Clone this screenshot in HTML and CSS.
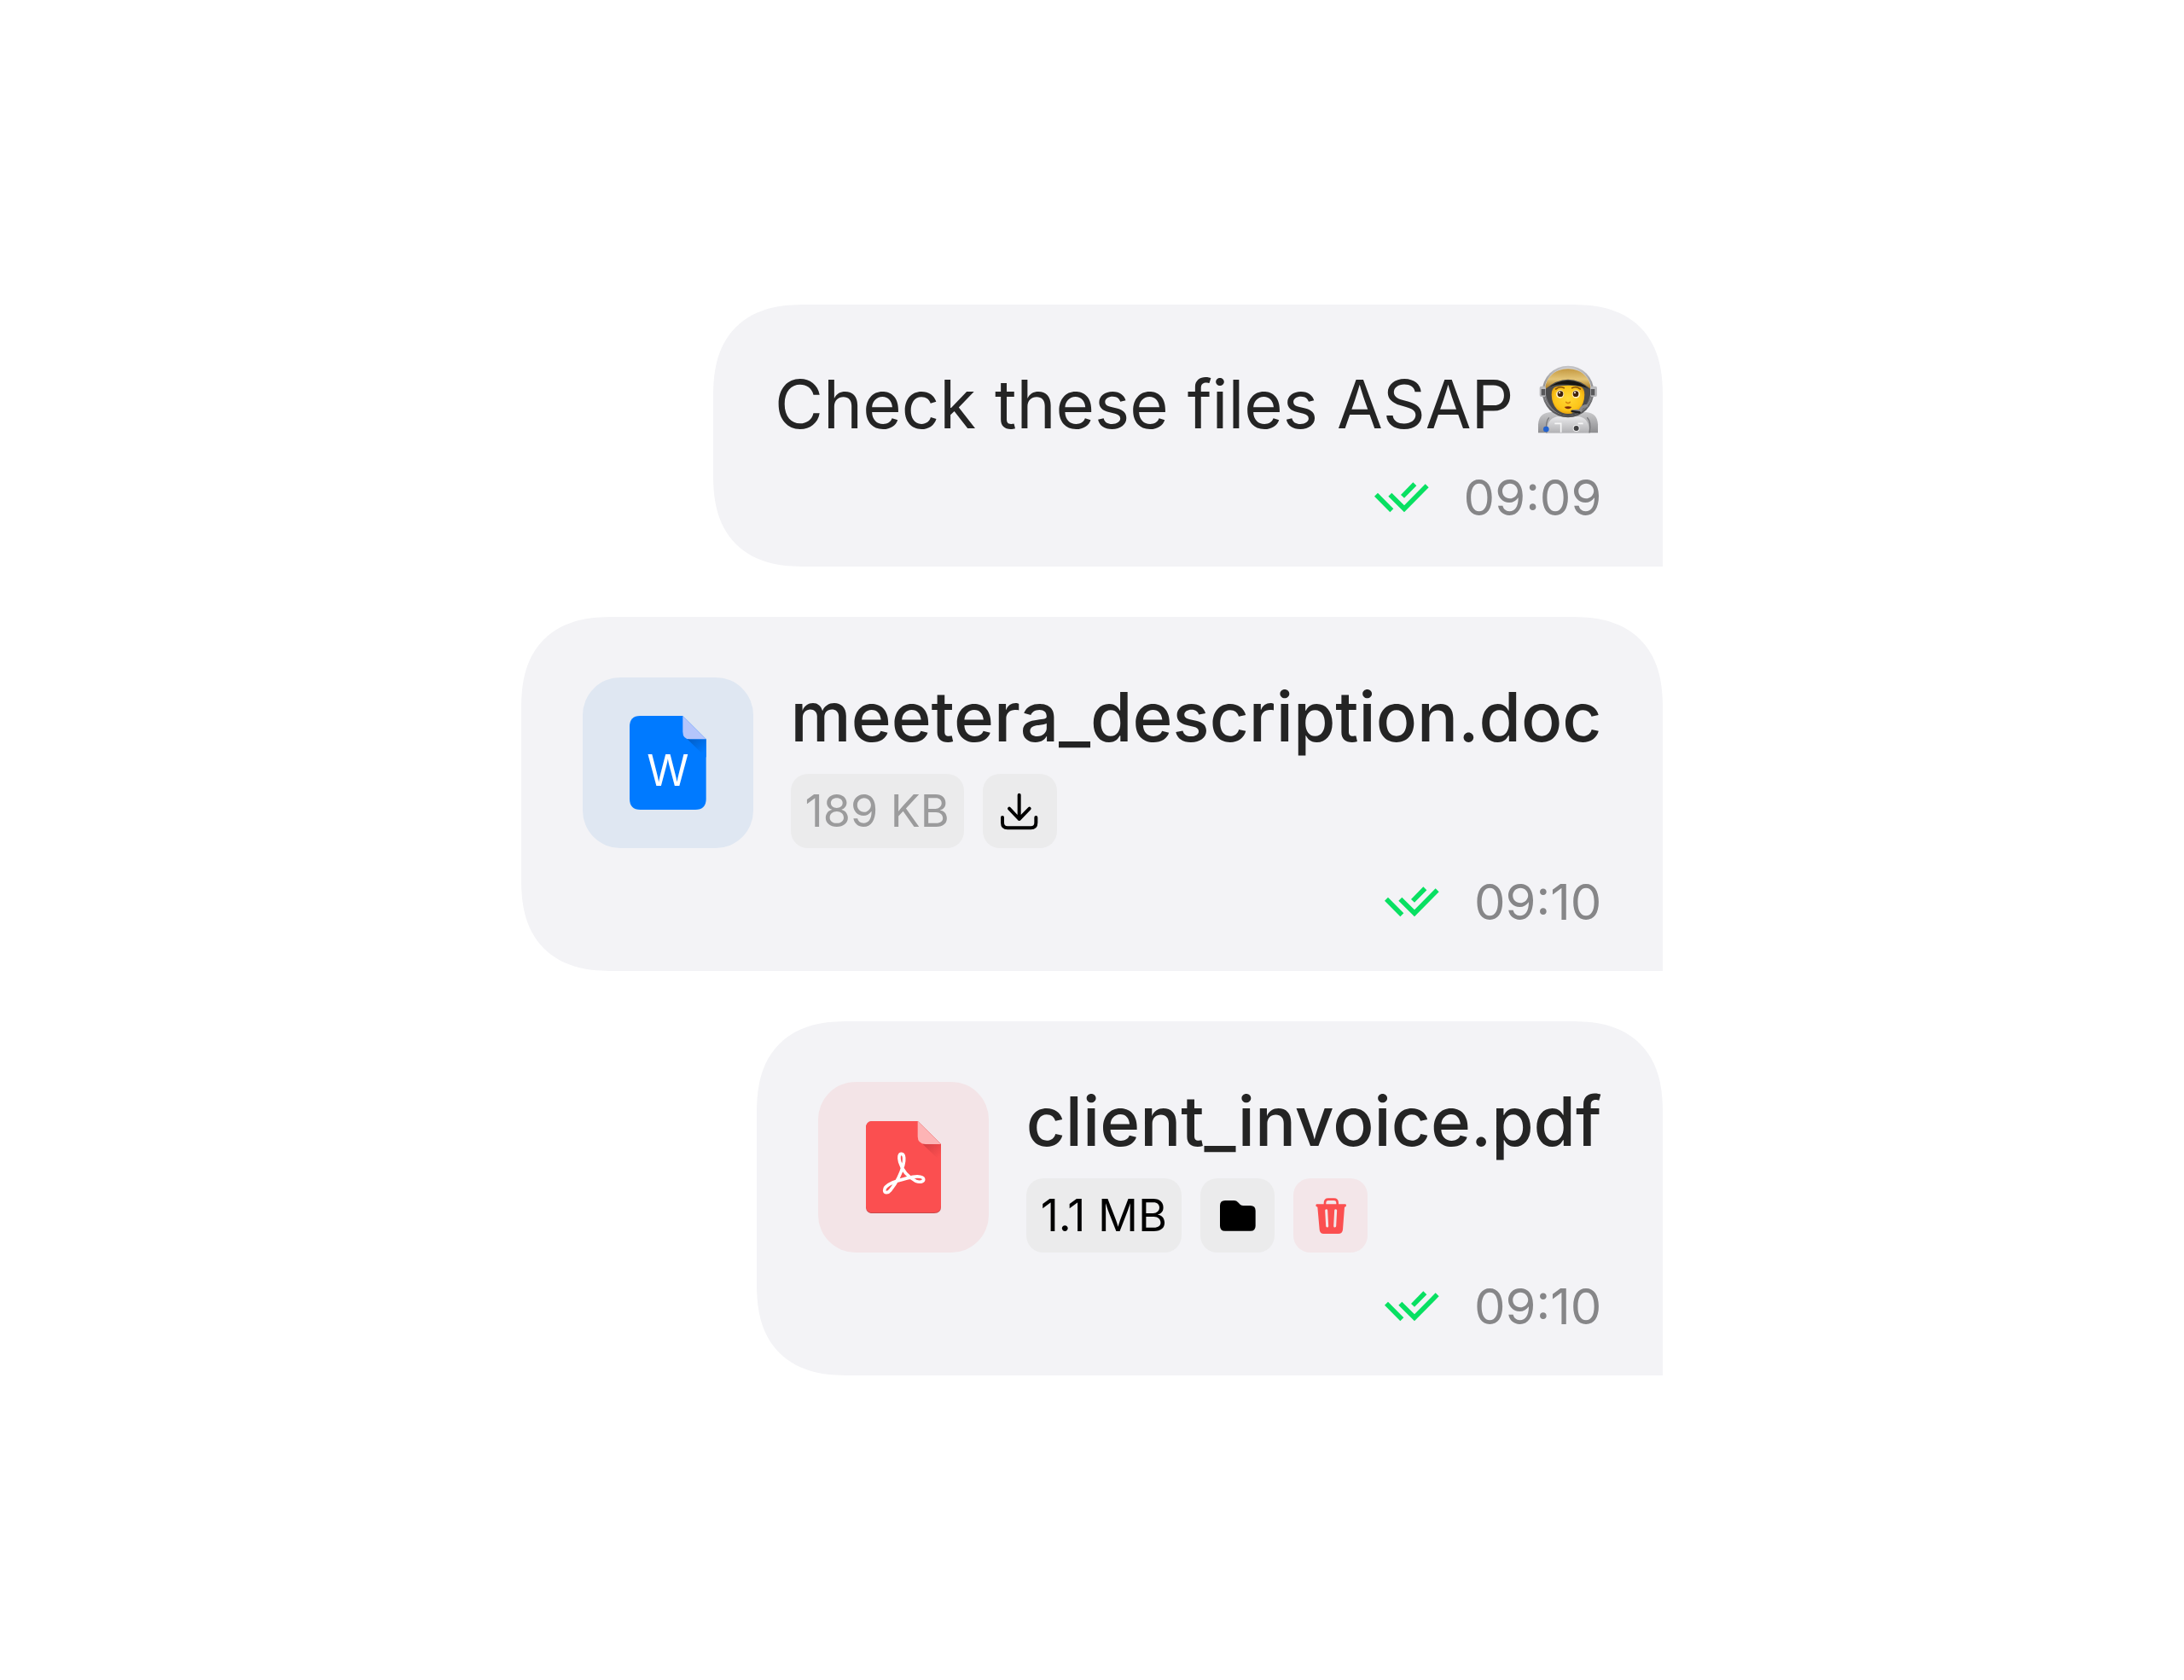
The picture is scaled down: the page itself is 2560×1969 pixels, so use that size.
FILE: index.html
```html
<!DOCTYPE html>
<html lang="en">
<head>
<meta charset="utf-8">
<meta name="viewport" content="width=device-width, initial-scale=1">
<title>Messages</title>
<link rel="stylesheet" href="styles.css">
</head>
<body>
<svg class="defs" aria-hidden="true">
  <symbol id="read" viewBox="0 0 192 108">
    <path d="M0 50 12 38 67 94 55 106ZM49 50 61 38 105 82 179 7 191 19 105 106ZM93 45 136 1 148 13 105 56Z" fill="#08e062"/>
  </symbol>
</svg>
<main class="chat">
  <article class="bubble">
    <p class="message">Check these files ASAP
      <svg class="emoji" viewBox="0 0 234 240" role="img" aria-label="Astronaut">
        <defs>
          <linearGradient id="suit" x1="0" y1="0" x2="0" y2="1"><stop offset="0" stop-color="#c9c9cb"/><stop offset="1" stop-color="#8d8d90"/></linearGradient>
          <linearGradient id="torso" x1="0" y1="0" x2="0" y2="1"><stop offset="0" stop-color="#e9e9eb"/><stop offset="1" stop-color="#b2b2b5"/></linearGradient>
          <linearGradient id="visor" x1="0" y1="0" x2="0" y2="1"><stop offset="0" stop-color="#c59a43"/><stop offset=".5" stop-color="#e3c477"/><stop offset="1" stop-color="#a87418"/></linearGradient>
          <radialGradient id="face" cx=".5" cy=".45" r=".6"><stop offset="0" stop-color="#ffd935"/><stop offset=".7" stop-color="#fcc419"/><stop offset="1" stop-color="#dd960c"/></radialGradient>
          <linearGradient id="shell" x1="0" y1="0" x2="0" y2="1"><stop offset="0" stop-color="#c6c6c9"/><stop offset=".45" stop-color="#8c8c8f"/><stop offset="1" stop-color="#4e4e50"/></linearGradient>
        </defs>
        <path d="M12 238V208Q14 168 56 165H180Q220 168 222 208V238Z" fill="url(#suit)"/>
        <path d="M42 238Q40 190 78 181H158Q194 190 192 238Z" fill="url(#torso)"/>
        <path d="M42 238Q36 200 50 184M192 238Q200 200 184 184" fill="none" stroke="#78787b" stroke-width="4"/>
        <circle cx="117" cy="93" r="91" fill="url(#shell)"/>
        <circle cx="117" cy="93" r="84" fill="#d4d4d6"/>
        <path d="M33 93a84 84 0 0 0 168 0Z" fill="#77777a"/>
        <path d="M117 13C68 13 36 48 37 86Q76 54 117 54T197 86C198 48 166 13 117 13Z" fill="url(#visor)"/>
        <path d="M37 84Q76 50 117 50T197 84Q197 102 188 127 164 177 117 177T46 127Q37 102 37 84Z" fill="#4b4b4c"/>
        <path d="M44 84Q76 54 117 54T190 84Q176 72 117 68T44 84Z" fill="#171512"/>
        <path d="M59 104Q59 78 76 75 117 68 159 75 175 78 175 104 174 136 157 155 138 171 117 171T78 155Q60 136 59 104Z" fill="url(#face)"/>
        <path d="M74 84Q88 73 103 80M131 80Q146 73 160 84" fill="none" stroke="#8b5307" stroke-width="5" stroke-linecap="round"/>
        <circle cx="89" cy="102" r="14" fill="#fff0c4"/><circle cx="145" cy="102" r="14" fill="#fff0c4"/>
        <circle cx="90" cy="101" r="10" fill="#40220a"/><circle cx="144" cy="101" r="10" fill="#40220a"/>
        <circle cx="87" cy="97" r="3" fill="#fff"/><circle cx="141" cy="97" r="3" fill="#fff"/>
        <path d="M110 130Q117 137 124 130" fill="none" stroke="#d9890d" stroke-width="5" stroke-linecap="round"/>
        <path d="M104 147Q117 143 130 147 125 154 117 154T104 147Z" fill="#7f2c0c"/>
        <path d="M186 142Q164 143 160 160L132 162" fill="none" stroke="#8a8a8d" stroke-width="10"/>
        <path d="M131 162 157 166" stroke="#1f1f20" stroke-width="8" stroke-linecap="round"/>
        <rect x="17" y="74" width="22" height="37" rx="6" fill="#bababd"/><rect x="23" y="84" width="14" height="22" fill="#59595b"/>
        <rect x="195" y="74" width="24" height="37" rx="6" fill="#bababd"/><rect x="197" y="84" width="14" height="22" fill="#59595b"/>
        <path d="M70 205H92V236M152 205H170" fill="none" stroke="#f7f7f8" stroke-width="5"/>
        <circle cx="40" cy="225" r="10" fill="#2463cf"/><circle cx="146" cy="222" r="12" fill="#f2f2f3"/><circle cx="146" cy="222" r="9" fill="#414143"/>
      </svg>
    </p>
    <footer class="meta"><svg class="read" role="img" aria-label="Read"><use href="#read"/></svg><time>09:09</time></footer>
  </article>

  <article class="bubble">
    <div class="file">
      <div class="tile tile-doc">
        <svg class="doc-icon" viewBox="0 0 270 330" aria-hidden="true">
          <defs><linearGradient id="docShade" x1="0" y1="0" x2="1" y2="1"><stop offset="0" stop-color="#005cc4"/><stop offset=".8" stop-color="#007aff"/></linearGradient></defs>
          <path d="M37 0H187L269 82V292Q269 330 231 330H38Q0 330 0 292V38Q0 0 37 0Z" fill="#007aff"/>
          <path d="M203 82H269V146Z" fill="url(#docShade)"/>
          <path d="M187 0 269 82H213Q187 82 187 56Z" fill="#b5c5fb"/>
          <text class="doc-letter" x="135" y="247" text-anchor="middle">W</text>
        </svg>
      </div>
      <div class="details">
        <h2 class="name">meetera_description.doc</h2>
        <div class="chips">
          <span class="chip chip-muted">189 KB</span>
          <button class="chip chip-icon" type="button" aria-label="Download">
            <svg class="glyph" viewBox="101 87 132 132" fill="none" stroke="#000" stroke-width="12" stroke-linecap="round" stroke-linejoin="round"><path d="M166 95V180M131 143 166 180 202 143M107 174V193Q107 211 125 211H207Q225 211 225 193V174"/></svg>
          </button>
        </div>
      </div>
    </div>
    <footer class="meta"><svg class="read" role="img" aria-label="Read"><use href="#read"/></svg><time>09:10</time></footer>
  </article>

  <article class="bubble">
    <div class="file">
      <div class="tile tile-pdf">
        <svg class="pdf-icon" viewBox="24 27 264 324" aria-hidden="true">
          <defs><linearGradient id="pdfShade" x1="0" y1="0" x2="1" y2="1"><stop offset="0" stop-color="#d63f42"/><stop offset=".8" stop-color="#fb4f50"/></linearGradient></defs>
          <path d="M48 27H206L288 108V327Q288 351 264 351H48Q24 351 24 327V51Q24 27 48 27Z" fill="#c8494b"/>
          <path d="M48 27H206L288 108V324Q288 348 264 348H48Q24 348 24 324V51Q24 27 48 27Z" fill="#fb4f50"/>
          <path d="M224 108H288V170Z" fill="url(#pdfShade)"/>
          <path d="M206 27 288 108H233Q206 106 206 81Z" fill="#fdb4b5"/>
          <path d="M149 142C140 142 139 155 143 170 150 195 170 222 200 238 212 243 227 241 227 232 227 222 208 220 190 223 165 228 140 234 118 243 98 252 88 262 89 271 90 281 102 280 110 270 128 248 146 215 155 182 160 165 160 142 149 142Z" fill="none" stroke="#fff" stroke-width="11"/>
        </svg>
      </div>
      <div class="details">
        <h2 class="name">client_invoice.pdf</h2>
        <div class="chips">
          <span class="chip">1.1 MB</span>
          <button class="chip chip-icon" type="button" aria-label="Open folder">
            <svg class="glyph" viewBox="749 431 132 132"><path d="M770 443H802Q810 443 815 449L824 458Q828 461 834 461H859Q877 461 877 479V532Q877 550 859 550H770Q752 550 752 532V461Q752 443 770 443Z"/></svg>
          </button>
          <button class="chip chip-icon chip-danger" type="button" aria-label="Delete">
            <svg class="glyph" viewBox="1073 431 132 132"><path d="M1118 460V452Q1118 439 1130 439H1150Q1162 439 1162 452V460" fill="none" stroke="#fb4f50" stroke-width="8"/><path d="M1089 456H1190Q1193 456 1193 461 1192 466 1187 466L1181 545Q1180 560 1165 560H1114Q1100 560 1099 545L1092 466Q1086 465 1086 461 1086 456 1089 456Z" fill="#fb4f50"/><path d="M1123 478 1126 533M1156 478 1153 533" stroke="#f3e6e9" stroke-width="9" stroke-linecap="round"/></svg>
          </button>
        </div>
      </div>
    </div>
    <footer class="meta"><svg class="read" role="img" aria-label="Read"><use href="#read"/></svg><time>09:10</time></footer>
  </article>
</main>
</body>
</html>
```
FILE: styles.css
```css
* {
  box-sizing: border-box;
  margin: 0;
}

body {
  min-height: 100vh;
  display: flex;
  align-items: center;
  justify-content: center;
  background: #fff;
  color: #242424;
  font-family: Inter, "Liberation Sans", sans-serif;
}

svg {
  display: block;
  flex: none;
}

.defs {
  display: none;
}

.chat {
  display: flex;
  flex-direction: column;
  align-items: flex-end;
  gap: 59px;
}

.bubble {
  display: flex;
  flex-direction: column;
  gap: 28px;
  padding: 71px 72px 46px;
  border-radius: 108px 108px 0 108px;
  corner-shape: superellipse(1.3);
  background: #f3f3f6;
}

.message,
.name {
  line-height: 92px;
}

.message {
  display: flex;
  align-items: flex-start;
  gap: 25px;
  font-size: 78px;
}

.name {
  font-size: 80px;
  font-weight: 500;
}

.emoji {
  width: 78px;
  height: 80px;
}

.meta {
  display: flex;
  align-items: center;
  justify-content: flex-end;
  gap: 41px;
  color: #868688;
  font-size: 58px;
  line-height: 70px;
}

.read {
  width: 64px;
  height: 36px;
}

.file {
  display: flex;
  gap: 44px;
}

.tile {
  display: grid;
  place-items: center;
  width: 200px;
  height: 200px;
  border-radius: 44px;
}

.tile-doc {
  background: #dfe7f2;
}

.tile-pdf {
  background: #f3e4e7;
}

.doc-icon {
  width: 90px;
  height: 110px;
}

.pdf-icon {
  width: 88px;
  height: 108px;
}

.doc-letter {
  fill: #fff;
  font-size: 150px;
}

.details {
  display: flex;
  flex-direction: column;
  gap: 21px;
}

.chips {
  display: flex;
  gap: 22px;
}

.chip {
  display: grid;
  place-items: center;
  height: 87px;
  padding: 0 17px;
  border: 0;
  border-radius: 20px;
  background: #ebebec;
  color: #000;
  font-size: 52px;
  line-height: 60px;
}

.chip-muted {
  color: #9b9b9c;
}

.chip-icon {
  width: 87px;
  padding: 0;
}

.chip-danger {
  background: #f3e6e9;
}

.glyph {
  width: 44px;
  height: 44px;
}
```
